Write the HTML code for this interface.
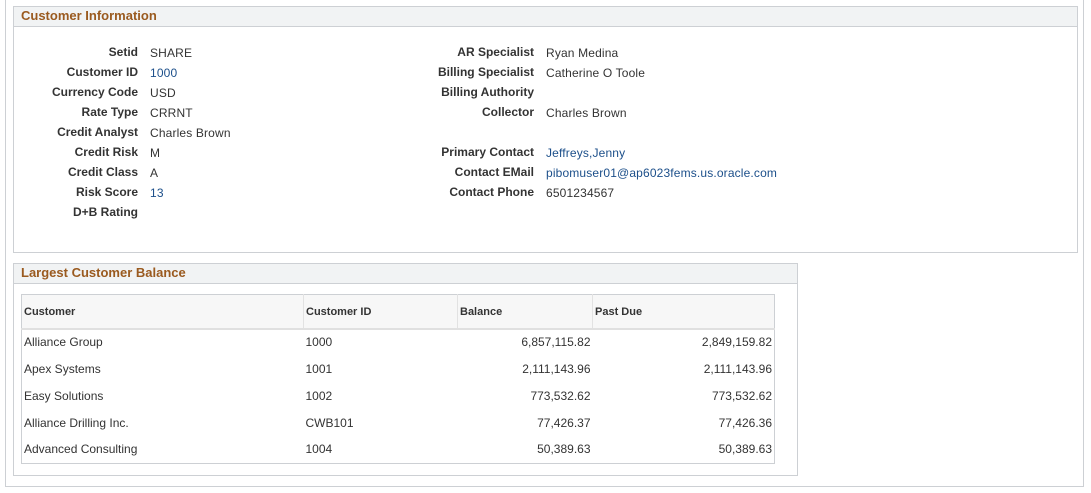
<!DOCTYPE html>
<html><head><style>
*{margin:0;padding:0;box-sizing:border-box}
body{width:1091px;height:493px;background:#fff;font-family:"Liberation Sans",Arial,sans-serif;font-size:12px;color:#333;position:relative;overflow:hidden}
.outer{position:absolute;left:5px;top:-2px;width:1079px;height:489px;border:1px solid #cdd0d4}
.box{position:absolute;border:1px solid #cdd0d4;background:#fff}
.hdr{height:20px;background:#f1f3f4;border-bottom:1px solid #cdd0d4;color:#9a5a1f;font-weight:bold;font-size:13px;padding:1px 0 0 7px}
.l{position:absolute;font-weight:bold;text-align:right;width:200px}
.v{position:absolute;letter-spacing:0.15px}
.a{color:#1c4f8a}
table{position:absolute;left:7px;top:30px;width:754px;border-collapse:collapse;border:1px solid #cdd0d4}
th{height:34px;background:#f7f7f7;text-align:left;font-size:11px;font-weight:bold;color:#333;padding:1px 2px 0;border-left:1px solid #e2e2e2;border-bottom:2px solid #e0e0e0}
td{height:27px;padding:0 2px 1px}
.r{text-align:right}
</style></head><body>
<div class="outer"></div>
<div class="box" style="left:13px;top:6px;width:1065px;height:247px">
<div class="hdr">Customer Information</div>
</div>
<div class="l" style="left:-62px;top:45px">Setid</div><div class="v" style="left:150px;top:46px">SHARE</div>
<div class="l" style="left:-62px;top:65px">Customer ID</div><div class="v a" style="left:150px;top:66px">1000</div>
<div class="l" style="left:-62px;top:85px">Currency Code</div><div class="v" style="left:150px;top:86px">USD</div>
<div class="l" style="left:-62px;top:105px">Rate Type</div><div class="v" style="left:150px;top:106px">CRRNT</div>
<div class="l" style="left:-62px;top:125px">Credit Analyst</div><div class="v" style="left:150px;top:126px">Charles Brown</div>
<div class="l" style="left:-62px;top:145px">Credit Risk</div><div class="v" style="left:150px;top:146px">M</div>
<div class="l" style="left:-62px;top:165px">Credit Class</div><div class="v" style="left:150px;top:166px">A</div>
<div class="l" style="left:-62px;top:185px">Risk Score</div><div class="v a" style="left:150px;top:186px">13</div>
<div class="l" style="left:-62px;top:205px">D+B Rating</div>
<div class="l" style="left:334px;top:45px">AR Specialist</div><div class="v" style="left:546px;top:46px">Ryan Medina</div>
<div class="l" style="left:334px;top:65px">Billing Specialist</div><div class="v" style="left:546px;top:66px">Catherine O Toole</div>
<div class="l" style="left:334px;top:85px">Billing Authority</div>
<div class="l" style="left:334px;top:105px">Collector</div><div class="v" style="left:546px;top:106px">Charles Brown</div>
<div class="l" style="left:334px;top:145px">Primary Contact</div><div class="v a" style="left:546px;top:146px">Jeffreys,Jenny</div>
<div class="l" style="left:334px;top:165px">Contact EMail</div><div class="v a" style="left:546px;top:166px">pibomuser01@ap6023fems.us.oracle.com</div>
<div class="l" style="left:334px;top:185px">Contact Phone</div><div class="v" style="left:546px;top:186px">6501234567</div>
<div class="box" style="left:13px;top:263px;width:785px;height:213px">
<div class="hdr">Largest Customer Balance</div>
<table>
<tr><th style="width:282px;border-left:none">Customer</th><th style="width:154px">Customer ID</th><th style="width:135px">Balance</th><th>Past Due</th></tr>
<tr><td>Alliance Group</td><td>1000</td><td class="r">6,857,115.82</td><td class="r">2,849,159.82</td></tr>
<tr><td>Apex Systems</td><td>1001</td><td class="r">2,111,143.96</td><td class="r">2,111,143.96</td></tr>
<tr><td>Easy Solutions</td><td>1002</td><td class="r">773,532.62</td><td class="r">773,532.62</td></tr>
<tr><td>Alliance Drilling Inc.</td><td>CWB101</td><td class="r">77,426.37</td><td class="r">77,426.36</td></tr>
<tr><td>Advanced Consulting</td><td>1004</td><td class="r">50,389.63</td><td class="r">50,389.63</td></tr>
</table>
</div>
</body></html>
